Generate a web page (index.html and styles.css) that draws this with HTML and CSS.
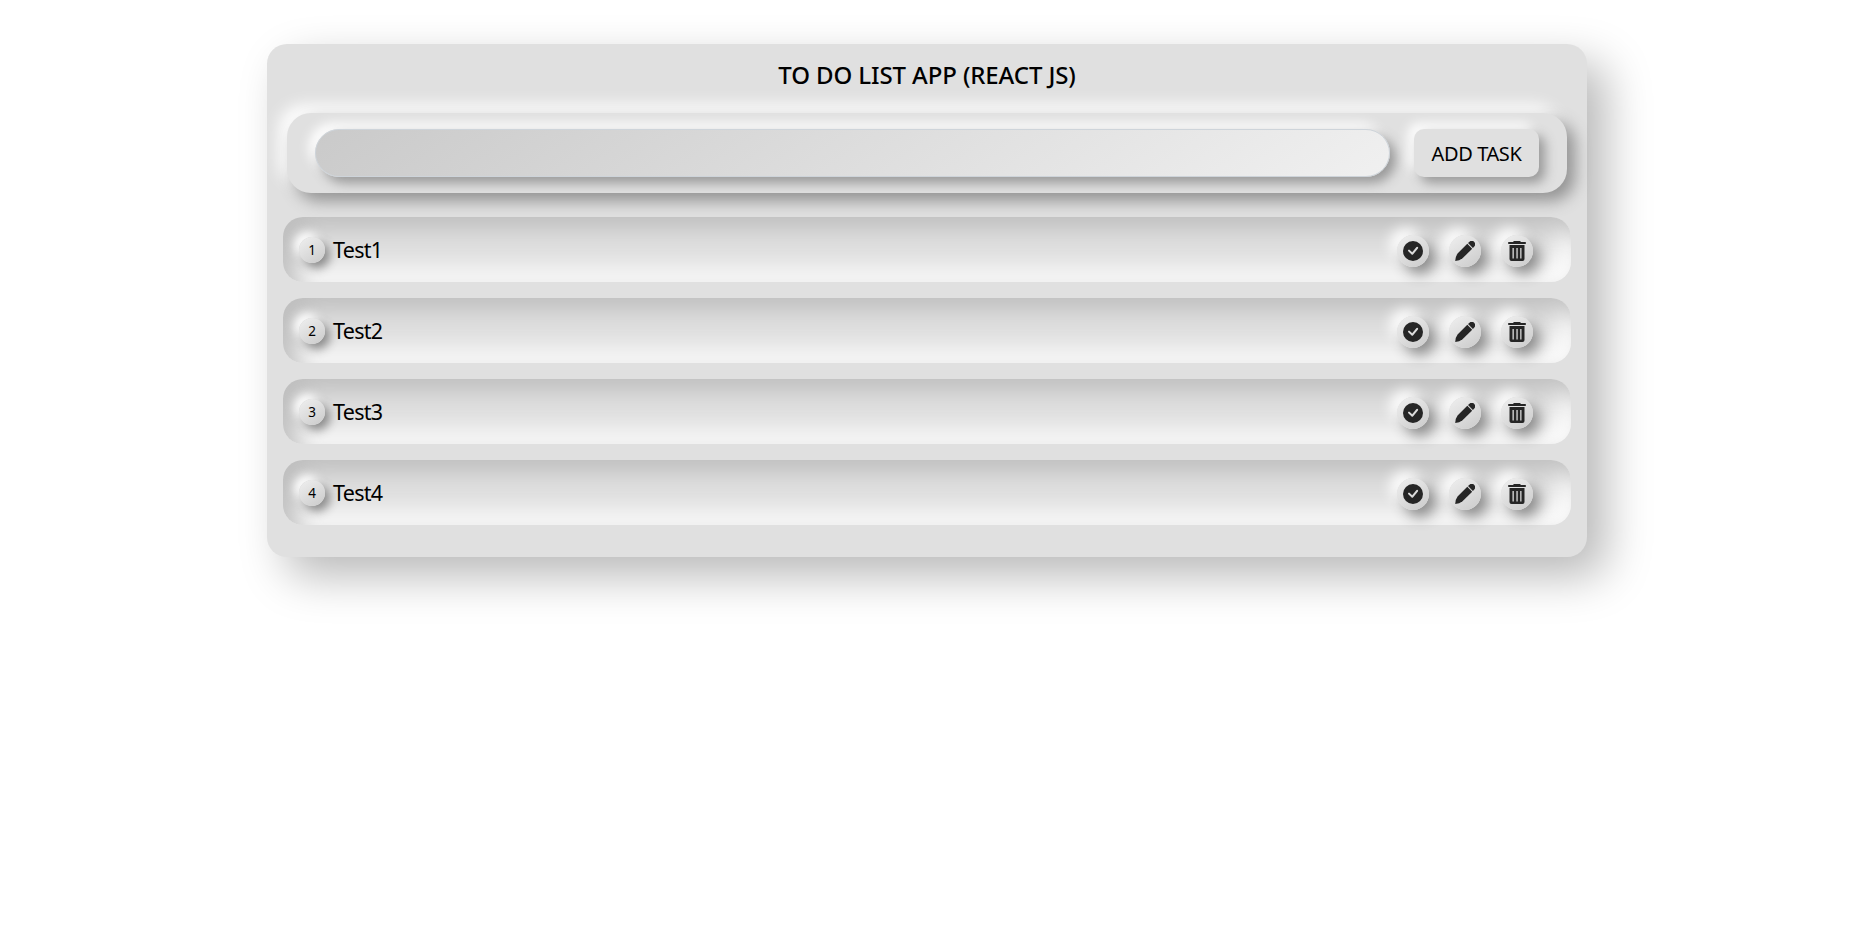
FILE: index.html
```html
<!DOCTYPE html>
<html lang="en">
<head>
<meta charset="utf-8">
<title>To Do List App</title>
<link rel="stylesheet" href="styles.css">
</head>
<body>
<svg class="sprite" width="0" height="0" aria-hidden="true">
  <symbol id="check" viewBox="0 0 20 20"><path fill-rule="evenodd" d="M10 0a10 10 0 1 1 0 20a10 10 0 0 1 0-20zM13.300 6.200 9.200 11.300 6.700 8.900A.95.95 0 0 0 5.300 10.300L8.600 13.500A.95.95 0 0 0 10 13.400L14.900 7.500A.95.95 0 0 0 13.300 6.200z"/></symbol>
  <symbol id="pencil" viewBox="0 0 20 20"><path d="M12.300 2.800 17.200 7.800 7.500 17.300Q4.500 19.700.2 20 .2 15.800 2.600 12.600z"/><path d="M13 2 14.200.9a3.300 3.300 0 0 1 4.900 4.800L17.900 7z"/></symbol>
  <symbol id="trash" viewBox="0 0 20 20"><path fill-rule="evenodd" d="M1.200 1h4.700L7 .1h6l1 .9h4.800v2H1.200zM2.500 4h15v14a2 2 0 0 1-2 2h-11a2 2 0 0 1-2-2zM5.500 7v10.500h1.300V7zm3.900 0v10.500h1.300V7zm3.800 0v10.500h1.300V7z"/></symbol>
</svg>
<main class="card">
  <h1 class="title">TO DO LIST APP (REACT JS)</h1>
  <form class="entry">
    <input class="entry-input" type="text" aria-label="Task">
    <button class="entry-button" type="button">ADD TASK</button>
  </form>
  <ul class="tasks">
    <li class="task"><span class="num">1</span><span class="name">Test1</span><span class="actions"><span class="act"><svg><use href="#check"/></svg></span><span class="act"><svg><use href="#pencil"/></svg></span><span class="act"><svg><use href="#trash"/></svg></span></span></li>
    <li class="task"><span class="num">2</span><span class="name">Test2</span><span class="actions"><span class="act"><svg><use href="#check"/></svg></span><span class="act"><svg><use href="#pencil"/></svg></span><span class="act"><svg><use href="#trash"/></svg></span></span></li>
    <li class="task"><span class="num">3</span><span class="name">Test3</span><span class="actions"><span class="act"><svg><use href="#check"/></svg></span><span class="act"><svg><use href="#pencil"/></svg></span><span class="act"><svg><use href="#trash"/></svg></span></span></li>
    <li class="task"><span class="num">4</span><span class="name">Test4</span><span class="actions"><span class="act"><svg><use href="#check"/></svg></span><span class="act"><svg><use href="#pencil"/></svg></span><span class="act"><svg><use href="#trash"/></svg></span></span></li>
  </ul>
</main>
</body>
</html>
```
FILE: styles.css
```css
* { box-sizing: border-box; }
html { background: #fff; }
body { margin: 0; min-height: 100vh; padding: 44px 0 0 267px; background: #fff; color: #000; font-family: "Noto Sans", "Open Sans", sans-serif; }
.sprite { display: block; }
.card {
  width: 1320px;
  padding: 16px 16px 32px;
  border-radius: 20px;
  background: #e0e0e0;
  box-shadow: 19px 19px 46px #b9b9b9, -19px -19px 46px #fff;
}
.title { margin: 0; height: 29px; line-height: 29px; text-align: center; font-size: 24px; font-weight: 500; letter-spacing: -0.1px; }
.entry {
  display: flex;
  gap: 24px;
  margin: 24px 4px;
  padding: 16px 28px;
  border-radius: 24px;
  background: #e0e0e0;
  box-shadow: 8px 8px 16px #939393, -8px -8px 16px #fff;
}
.entry-input {
  flex: 1;
  height: 48px;
  border: 1px solid #ced4da;
  border-radius: 24px;
  background: linear-gradient(145deg, #cacaca, #f0f0f0);
  box-shadow: 6px 6px 12px #989898, -6px -6px 12px #fff;
}
.entry-button {
  width: 125px;
  height: 48px;
  padding: 0;
  border: 0;
  border-radius: 10px;
  background: #e0e0e0;
  box-shadow: 6px 6px 12px #989898, -6px -6px 12px #fff;
  font: 400 20px "Noto Sans", sans-serif;
  letter-spacing: -0.4px;
  color: #000;
}
.tasks { display: grid; gap: 16px; margin: 0; padding: 0; list-style: none; }
.task {
  display: flex;
  align-items: center;
  height: 65px;
  padding: 0 38px 0 16px;
  border-radius: 20px;
  background: #e0e0e0;
  box-shadow: inset 12px 12px 25px #bebebe, inset -12px -12px 25px #fff;
}
.num {
  width: 26px;
  height: 26px;
  margin-right: 8px;
  border-radius: 50%;
  background: linear-gradient(145deg, #f0f0f0, #cacaca);
  box-shadow: 5px 5px 10px #8c8c8c, -5px -5px 10px #fff;
  line-height: 26px;
  text-align: center;
  font-size: 13.5px;
}
.name { font-size: 21.5px; letter-spacing: -0.7px; }
.actions { display: flex; gap: 20px; margin: 2px 0 0 auto; }
.act {
  display: grid;
  place-items: center;
  width: 32px;
  height: 32px;
  border-radius: 50%;
  background: linear-gradient(145deg, #f0f0f0, #cacaca);
  box-shadow: 7px 7px 14px #8c8c8c, -7px -7px 14px #fff;
}
.act svg { width: 20px; height: 20px; fill: #262626; }
```
